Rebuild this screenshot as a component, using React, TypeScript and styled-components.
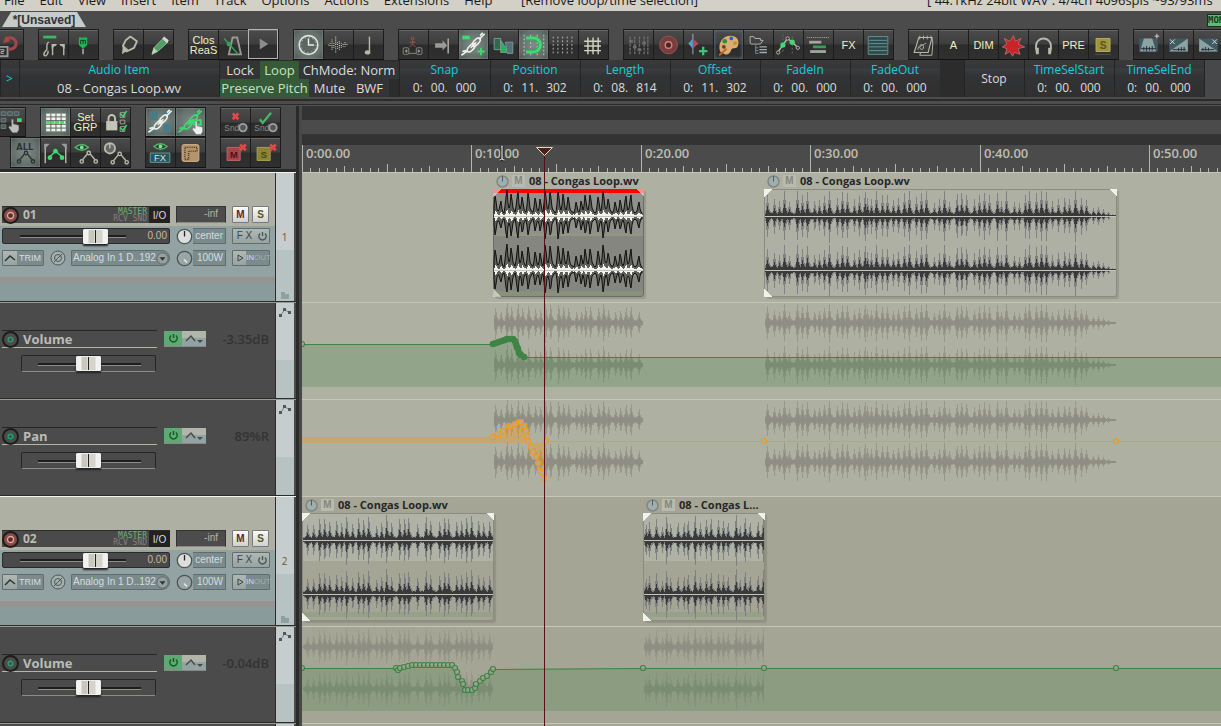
import React from 'react';
import styled, { createGlobalStyle, css } from 'styled-components';

const ui = '"Open Sans", "Noto Sans", sans-serif';
const arial = '"Liberation Sans", Arial, sans-serif';

const Global = createGlobalStyle`
  *, *::before, *::after { box-sizing: border-box; }
  body { margin: 0; background: #4b4b4b; font-family: ${ui}; }
  button, input, select { font: inherit; margin: 0; padding: 0; border: 0; }
  button { cursor: pointer; }
`;

/* ---------- page frame ---------- */

const Page = styled.div`
  height: 100vh;
  overflow: hidden;
  display: flex;
  flex-direction: column;
  background: #4b4b4b;
`;

const MenuBar = styled.nav`
  flex: none;
  height: 11px;
  overflow: hidden;
  display: flex;
  align-items: flex-end;
  justify-content: space-between;
  background: #d3d0c7;
  color: #1a1a1a;
  font-size: 13px;
  line-height: 22px;
  white-space: pre;
`;

const MenuGroup = styled.div`
  display: flex;
  gap: 15px;
  padding-left: 4px;
`;

const MenuItem = styled.button`
  background: none;
  color: inherit;
  white-space: pre;
`;

const AudioStatus = styled.span`
  flex: none;
  width: 294px;
`;

const TabRow = styled.div`
  flex: none;
  height: 18px;
  display: flex;
  align-items: flex-end;
  justify-content: space-between;
  padding: 0 0 2px 2px;
`;

const ProjectTab = styled.button`
  width: 84px;
  height: 15px;
  clip-path: polygon(9px 0, 75px 0, 100% 100%, 0 100%);
  background: #c6cccb;
  color: #333;
  font: bold 12px/14px ${arial};
`;

const MonitorBadge = styled.button`
  width: 26px;
  height: 13px;
  margin-right: -12px;
  border: 1px solid #16301c;
  background: #62b878;
  color: #10401c;
  font: bold 9px/11px "DejaVu Sans Mono", monospace;
  text-align: left;
`;

/* ---------- toolbars ---------- */

const Toolbar = styled.div<{ $indent?: number }>`
  flex: none;
  display: flex;
  gap: 14px;
  margin-left: ${p => p.$indent ?? 0}px;
`;

const ToolGroup = styled.div`
  flex: none;
  display: flex;
  border-bottom: 1px solid #121212;
  border-right: 1px solid #1c1c1c;
`;

const ToolButton = styled.button<{ $look?: 'on' | 'outline' | 'lit'; $h: number }>`
  flex: none;
  width: 30px;
  height: ${p => p.$h}px;
  display: grid;
  place-items: center;
  border-top: 1px solid #1a1a1a;
  border-left: 1px solid #1c1c1c;
  background: linear-gradient(#666 0 1px, #4a4a4a 1px, #3e3e3e 14px, #2c2c2c 15px, #303030);
  color: #eef0c4;
  font: 11px/10px ${arial};
  overflow: hidden;
  svg { display: block; }
  ${p => p.$look === 'on' && css`
    background: radial-gradient(#7f8c88, #616c69 70%, #48524f);
    box-shadow: inset 0 0 2px #a0aca8;
  `}
  ${p => p.$look === 'outline' && css`border: 1px solid #b4b4b4;`}
  ${p => p.$look === 'lit' && css`box-shadow: inset 0 0 3px 1px #536878;`}
`;

/* ---------- item info bar ---------- */

const InfoBar = styled.div`
  flex: none;
  height: 37px;
  display: flex;
  overflow: hidden;
  background: #2c2c2c;
  color: #dcdcdc;
  font-size: 12px;
  line-height: 18px;
`;

const InfoCell = styled.div<{ $w: number }>`
  flex: none;
  width: ${p => p.$w}px;
  display: flex;
  flex-direction: column;
  align-items: center;
  justify-content: center;
  padding: 1px 1px 0 0;
  border-left: 1px solid #242424;
  background: linear-gradient(#3a3a3a, #343639 8px, #3a3d42 9px, #323335 16px, #303030);
`;

const InfoTitle = styled.span`
  color: #14cfd4;
`;

const InfoValue = styled.span`
  display: flex;
  gap: 8px;
`;

const ItemName = styled.span`
  font-size: 13px;
`;

const InfoGap = styled.div`
  flex: none;
  width: 24px;
`;

const InfoTail = styled.div`
  flex: 1;
  border-left: 1px solid #242424;
  background: #46484a;
`;

const FlagCell = styled.div`
  flex: none;
  width: 180px;
  padding-top: 1px;
  border-left: 1px solid #242424;
`;

const FlagRow = styled.div`
  display: flex;
  font-size: 13px;
`;

const Flag = styled.button<{ $on?: boolean; $w: number }>`
  flex: none;
  width: ${p => p.$w}px;
  height: 18px;
  background: ${p => (p.$on ? '#345a38' : '#333436')};
  white-space: nowrap;
  color: ${p => (p.$on ? '#c4e4c0' : '#dcdcdc')};
`;

const Rail = styled.div`
  flex: none;
  height: 9px;
  background: linear-gradient(#4b4b4b 2px, #2b2b2b 2px 4px, #4d4d4d 4px 7px, #2b2b2b 7px 8px, #505050 8px);
`;

/* ---------- main split ---------- */

const Main = styled.main`
  flex: 1;
  min-height: 0;
  display: flex;
`;

const Panel = styled.aside`
  flex: none;
  width: 302px;
  display: flex;
  flex-direction: column;
  border-right: 3px solid #484848;
`;

const PanelInner = styled.div`
  flex: 1;
  min-height: 0;
  display: flex;
  flex-direction: column;
  border-right: 3px solid #2a2a2a;
`;

const PanelTools = styled.div`
  flex: none;
  height: 66px;
  padding-top: 1px;
  overflow: hidden;
  border-bottom: 3px solid #2a2a2a;
`;

const TrackRow = styled.section<{ $h: number; $env?: boolean }>`
  flex: none;
  height: ${p => p.$h}px;
  display: flex;
  padding-right: 2px;
  border-top: 1px solid ${p => (p.$env ? '#9a9c94' : '#f4f4ea')};
  border-bottom: 1px solid #2c2c2c;
`;

const TrackBody = styled.div`
  flex: 1;
  border-right: 1px solid #2c2c2c;
  padding: 33px 5px 0 2px;
  display: grid;
  grid-template-columns: 168px 50px 38px;
  grid-auto-rows: 16px;
  gap: 6px;
  background: linear-gradient(#aeb0a3 53px, #93a3a3 53px 104px, #949490 104px 110px, #8a9b9b 110px);
`;

const Strip = styled.div`
  flex: none;
  width: 18px;
  display: flex;
  flex-direction: column;
  align-items: center;
  justify-content: space-between;
  padding-right: 1px;
  background: linear-gradient(#c5cdce 60%, #b6c3c2 60%);
  color: #6e5a34;
  font-size: 10px;
  line-height: 16px;
`;

const StripNumber = styled.span`
  padding-top: 56px;
`;

const NameBox = styled.div`
  display: flex;
  align-items: center;
  height: 17px;
  background: #4a4a4a;
  border-top: 1px solid #2c2c2c;
`;

const RoundButton = styled.button<{ $rec?: boolean }>`
  flex: none;
  width: 17px;
  height: 17px;
  border: 2px solid #1d1d1d;
  border-radius: 50%;
  display: grid;
  place-items: center;
  background: ${p => (p.$rec ? '#8c4a46' : '#4c4c4c')};
`;

const TrackName = styled.span<{ $size?: number }>`
  flex: 1;
  padding-left: 4px;
  color: #bcbcb4;
  font-weight: bold;
  font-size: ${p => p.$size ?? 12}px;
  line-height: 16px;
`;

const Routing = styled.span`
  flex: none;
  display: flex;
  flex-direction: column;
  padding-right: 2px;
  color: #82827e;
  font: 8px/7px "DejaVu Sans Mono", monospace;
  text-align: right;
  b { font-weight: normal; color: #6fb07a; }
`;

const IoButton = styled.button`
  flex: none;
  width: 21px;
  height: 16px;
  background: #222;
  color: #ddd;
  font: 10px/15px ${arial};
`;

const Meter = styled.output`
  height: 17px;
  padding-right: 7px;
  border: 1px solid #333;
  border-bottom-color: #888;
  background: #4c4c4c;
  color: #b4b4ac;
  font: 10px/14px ${arial};
  text-align: right;
`;

const MuteSolo = styled.div`
  display: flex;
  gap: 3px;
`;

const LetterButton = styled.button<{ $c: string }>`
  width: 17px;
  height: 17px;
  border: 1px solid #7a7a7a;
  border-radius: 1px;
  background: linear-gradient(#fafafa, #cfd2d0);
  color: ${p => p.$c};
  font: bold 10px/14px ${arial};
`;

const FaderBox = styled.div`
  display: flex;
  align-items: center;
  justify-content: space-between;
  padding: 0 2px 0 17px;
  border: 1px solid #2a2a2a;
  border-radius: 2px;
  background: #4a4a4a;
  color: #c4b8a4;
  font: 10px/14px ${arial};
`;

const Fader = styled.input<{ $w: number }>`
  appearance: none;
  width: ${p => p.$w}px;
  height: 20px;
  background: linear-gradient(transparent 9px, #1e1e1e 9px 11px, #8e8e88 11px 12px, transparent 12px);
  &::-webkit-slider-thumb {
    appearance: none;
    width: 25px;
    height: 15px;
    border: 1px solid #eee;
    border-radius: 1px;
    background: linear-gradient(90deg, #f2f2f0 4px, #c8c8bc 5px 10px, #f0f0f0 11px, #222 11px 12px, #d4d4cc 12px 18px, #f2f2f0 19px);
    box-shadow: 0 2px 2px #222;
  }
`;

const Knobbed = styled.div`
  display: flex;
  align-items: center;
  svg { flex: none; }
`;

const KnobValue = styled.output`
  flex: 1;
  height: 16px;
  padding-right: 2px;
  border: 1px solid #5f6d6d;
  border-left: 0;
  background: #7b8b8b;
  color: #d6dce0;
  font: 10px/14px ${arial};
  text-align: right;
`;

const SmallPair = styled.div`
  display: flex;
  height: 16px;
  border: 1px solid #5f6d6d;
  border-radius: 1px;
  background: #7b8b8b;
`;

const SmallButton = styled.button<{ $w: number; $light?: boolean; $size?: number }>`
  width: ${p => p.$w}px;
  display: grid;
  place-items: center;
  background: ${p => (p.$light ? 'linear-gradient(#b0b8b4, #98a4a2)' : 'transparent')};
  color: ${p => (p.$light ? '#3c4444' : '#d6dce0')};
  font: ${p => p.$size ?? 9}px/12px ${arial};
  white-space: pre;
  i { font-style: normal; color: #a3adad; }
`;

const InputRow = styled.div`
  display: flex;
  align-items: center;
  justify-content: space-between;
`;

const InputPicker = styled.label`
  display: flex;
  align-items: center;
  width: 99px;
  height: 16px;
  border: 1px solid #5f6d6d;
  border-radius: 1px 8px 8px 1px;
  background: #7b8b8b;
  svg { flex: none; }
`;

const InputSelect = styled.select`
  appearance: none;
  flex: none;
  width: 84px;
  padding-left: 1px;
  background: transparent;
  color: #d6dce0;
  font: 10px/14px ${arial};
`;

const EnvBody = styled.div`
  flex: 1;
  border-right: 1px solid #2c2c2c;
  padding: 27px 6px 0 2px;
  background: #4b4b4b;
`;

const EnvTop = styled.div`
  display: flex;
  align-items: center;
  height: 18px;
`;

const EnvName = styled.div`
  width: 155px;
  height: 18px;
  display: flex;
  align-items: center;
  border-top: 1px solid #262626;
  border-bottom: 1px solid #b4b4a8;
`;

const EnvButtons = styled.div`
  display: flex;
  margin-left: 7px;
  height: 16px;
  border-bottom: 1px solid #888;
`;

const EnvButton = styled.button<{ $w: number; $on?: boolean }>`
  width: ${p => p.$w}px;
  height: 15px;
  display: grid;
  place-items: center;
  background: ${p => (p.$on ? '#62a874' : 'linear-gradient(#b2b6aa 7px, #93a3a3 7px)')};
`;

const EnvValue = styled.output`
  flex: 1;
  color: #333;
  font-weight: 600;
  font-size: 13px;
  line-height: 18px;
  text-align: right;
`;

const EnvSlider = styled.div`
  width: 135px;
  height: 17px;
  margin: 7px 0 0 19px;
  display: flex;
  align-items: center;
  padding-left: 16px;
  border: 1px solid #262626;
  border-bottom-color: #8c8c88;
  border-radius: 2px;
`;

/* ---------- arrange view ---------- */

const Arrange = styled.div`
  flex: 1;
  min-width: 0;
  position: relative;
  display: flex;
  flex-direction: column;
  overflow: hidden;
`;

const Regions = styled.div`
  flex: none;
  height: 39px;
  background: linear-gradient(#333 14px, #4b4b4b 14px 28px, #333 28px);
`;

const Ruler = styled.div`
  flex: none;
  height: 27px;
  position: relative;
  background: #4b4b4b;
  svg { display: block; }
`;

const RulerLabel = styled.span`
  position: absolute;
  top: 0;
  color: #bebeb2;
  font-size: 13px;
  line-height: 16px;
  font-weight: 600;
`;

const Lane = styled.div<{ $h: number; $bg: string }>`
  flex: none;
  height: ${p => p.$h}px;
  position: relative;
  background: ${p => p.$bg};
  border-top: 1px solid #c4c6ba;
`;

const LaneDrawing = styled.svg`
  display: block;
  width: 100%;
  height: 100%;
`;

const Item = styled.article<{ $w: number }>`
  position: absolute;
  top: 0;
  width: ${p => p.$w}px;
`;

const ItemHeader = styled.header`
  height: 16px;
  display: flex;
  align-items: center;
  gap: 3px;
  padding-left: 3px;
  white-space: nowrap;
`;

const ItemMute = styled.button`
  width: 13px;
  height: 12px;
  background: #b9bbb0;
  color: #85877c;
  font: bold 10px/12px ${arial};
`;

const ItemTitle = styled.span`
  flex: 1;
  min-width: 0;
  margin-left: 1px;
  overflow: hidden;
  text-overflow: ellipsis;
  color: #262626;
  font-size: 11px;
  line-height: 16px;
  font-weight: bold;
`;

const ItemClip = styled.div<{ $bg: string; $edge: string }>`
  height: 108px;
  border: 1px solid ${p => p.$edge};
  border-radius: 0 0 3px 3px;
  background: ${p => p.$bg};
  box-shadow: 2px 2px 1px rgba(90, 90, 70, 0.25);
  svg { display: block; margin: -1px; }
`;

const Playhead = styled.svg`
  position: absolute;
  top: 40px;
  left: 0;
  width: 100%;
  height: 100%;
  pointer-events: none;
`;

/* ---------- icons ---------- */

const G = '#b8b8aa';
const GR = '#3ddc70';
const S = { fill: 'none', stroke: G, strokeWidth: 1.5 } as const;

const Snd = () => (
  <g>
    <text x="3" y="25" fill="#8a8a8a" fontSize="9" fontFamily="Liberation Sans">Snd</text>
    <circle cx="23" cy="21" r="4" fill="#555" stroke="#98a0a4" strokeWidth="2" />
  </g>
);
const Nodes = ({ c = G, y = 0, x = 0 }: { c?: string; y?: number; x?: number }) => (
  <g transform={`translate(${x} ${y})`} fill="none" stroke={c} strokeWidth="1.5">
    <path d="M9 22l5-6M17 16l5 6" />
    <circle cx="8" cy="24" r="1.800" />
    <circle cx="15.500" cy="15" r="1.800" />
    <circle cx="23" cy="24" r="1.800" />
  </g>
);
const Chain = ({ c = '#f0f2ea' }: { c?: string }) => (
  <g fill="none" stroke={c} strokeWidth="1.7">
    <ellipse cx="12.500" cy="18" rx="5.500" ry="2.600" transform="rotate(-48 12.500 18)" />
    <ellipse cx="18" cy="12" rx="5.500" ry="2.600" transform="rotate(-48 18 12)" />
    <path d="M2 26l7-5M3 22l4-1M21 9l6-6M22 5l3-3M12 18l6-6" />
  </g>
);
const Eye = ({ x, y }: { x: number; y: number }) => (
  <g transform={`translate(${x} ${y})`}>
    <path d="M-7 0Q0-6 7 0Q0 6-7 0Z" fill="#1e4428" stroke="#58b070" strokeWidth="1.500" />
    <circle r="2" fill="#7ee090" />
  </g>
);
const Cross = ({ x, y, c = '#e04848' }: { x: number; y: number; c?: string }) => (
  <path d={`M${x - 3} ${y - 3}l6 6m0-6l-6 6`} stroke={c} strokeWidth="3" />
);
const Hand = ({ x, y }: { x: number; y: number }) => (
  <path transform={`translate(${x} ${y})`} d="M3 0h2v5l6 1.500v5l-2 3H4L0 9l1-2 2 1z" fill="#eee" stroke="#666" strokeWidth=".5" />
);

const icons: Record<string, React.ReactNode> = {
  revert: <g><path d="M2 17h12v10H2z" fill="none" stroke="#999" strokeWidth="2" /><path d="M6 20h4v2H7v2h3" stroke="#bbb" fill="none" /><path d="M13 9a6 6 0 1 1 2 10" fill="none" stroke="#a04848" strokeWidth="3.500" /><path d="M9 13l3-8 5 6z" fill="#a04848" /></g>,
  take: <g><path d="M4 5h14v3H4z" fill={GR} opacity=".75" /><path d="M10 12c-3 1-2 5-2 7s-5 5-3 7 5-2 4-5" {...S} /><path d="M14 26V15h4M26 26V15h-4" {...S} /><path d="M13 14h6l-6 5zM27 14h-6l6 5z" fill={G} /></g>,
  marker: <g><path d="M10 7h9v8l-4.500 4L10 15z" fill="#25b455" /><path d="M12 14v-4h5v4M14.500 10v4" stroke="#0d3a1c" fill="none" /><path d="M14.500 19v6" stroke={G} strokeWidth="1.500" /></g>,
  pen: <g><path d="M9 16l3-6 5-4 7 5-3 7-8 4z" fill="#3c3c3a" stroke={G} strokeWidth="2" strokeLinejoin="round" /><path d="M9 15l6 5-7 5z" fill={G} /></g>,
  pencil: <g><path d="M8 25l2-7L20 8l5 4-11 10z" fill="#4f9e66" stroke="#8fc49c" /><path d="M19 8l2-2 5 4-2 3z" fill="#d0d8cc" /><path d="M8 25l2-7 4 4z" fill="#c8ccb8" /></g>,
  metronome: <g><path d="M14 7h5l4 18H10z" fill="none" stroke="#9a9a94" strokeWidth="2" /><path d="M5 8l15 17" stroke="#2fa35a" strokeWidth="1.500" /><circle cx="10" cy="14" r="2.500" fill="#2fa35a" /></g>,
  play: <path d="M11 9l9 6-9 6z" fill="#8c8c8c" />,
  clock: <g><circle cx="15" cy="15" r="10" fill="#5c6764" stroke="#dfe3da" strokeWidth="1.700" /><path d="M15 8v7h6" stroke="#eef0e8" strokeWidth="1.500" fill="none" /><circle cx="15" cy="15" r="8" fill="none" stroke="#cfd4cc" strokeDasharray="1 3.200" /></g>,
  wave: <path d="M4 15h1M6 13v4M8 9v12M10 13v5M12 6v18M14 12v8M16 11v10M18 13v5M20 14v3M22 12v5M24 14v2" stroke="#c8c8bc" strokeDasharray="1 1" fill="none" strokeWidth="1.200" />,
  note: <g><path d="M16 6v17" stroke={G} strokeWidth="1.500" /><ellipse cx="14" cy="23" rx="3" ry="2.300" fill={G} /></g>,
  walk: <g fill="none" stroke="#8a8a84"><circle cx="14" cy="8" r="1.500" stroke="#a0584a" /><path d="M14 10v4l-3 3M14 14l3 3M11 12h6" stroke="#a0584a" /><rect x="4" y="18" width="6" height="7" rx="1" /><rect x="18" y="18" width="6" height="7" rx="1" /><path d="M8 20v3l-2-1.500zM20 20v3l2-1.500z" fill={G} /><path d="M10 24h8" /></g>,
  toEnd: <g><path d="M6 13h8v-3l5 5.500-5 5.500v-3H6z" fill="#9a9a94" /><path d="M20 8v16" stroke={G} strokeWidth="1.500" /></g>,
  chainPlus: <g><path d="M3 5h8v4H3z" fill={GR} /><Chain /><path d="M23 18v8M19 22h8" stroke={GR} strokeWidth="2" /></g>,
  crossfade: <g stroke="#7d9a9a"><path d="M5 8h7v12H5z" fill="#2f6b4b" /><path d="M12 10l9 13H12z" fill="#22b455" /><path d="M17 12h8v12h-6z" fill="#4f7478" /></g>,
  magnet: <g><path d="M5 4v22M12 4v22M19 4v22M26 4v22" stroke="#c4d0c4" strokeDasharray="2 2" /><path d="M7 8h8a7 7 0 0 1 0 14H7" fill="none" stroke={GR} strokeWidth="4" /><path d="M7 9.500h8a5 5 0 0 1 0 11H7" fill="none" stroke="#115544" opacity=".4" /></g>,
  dots: <path d="M4 6v20M9 6v20M14 6v20M19 6v20M24 6v20" stroke="#bcbcb4" strokeDasharray="2 2" />,
  grid: <path d="M9 7v18M14.500 7v18M20 7v18M5 11h18M5 16h18M5 21h18" stroke="#d4d4c4" strokeWidth="1.500" />,
  mixer: <g stroke="#6c6c6c" strokeWidth="1.500"><path d="M6 6v20M11 6v20M16 6v20M21 6v20M25 6v20" strokeDasharray="3 1" /><path d="M5 11h4M9 17h4M14 20h4M19 13h4" strokeWidth="3" /></g>,
  record: <g><circle cx="15" cy="15" r="9.500" fill="#7c3c3c" stroke="#8d5a5a" /><circle cx="15" cy="15" r="3.500" fill="#4c2222" stroke="#c48a80" strokeWidth="1.500" /></g>,
  split: <g><path d="M9 3v22" stroke="#a4b4bc" /><path d="M9 8v11l-5-5.500z" fill="#4aa4cc" /><path d="M9 8v11l6-5.500z" fill="#b84c44" /><path d="M20 17v9M15.500 21.500h9" stroke="#3cc868" strokeWidth="2.500" /></g>,
  palette: <g><path d="M6 22C3 13 9 5 17 5s10 6 8 11c-1 4-6 1-7 4s-3 6-7 5z" fill="#d8ae72" /><circle cx="11" cy="11" r="2.500" fill="#2f8a44" /><circle cx="18" cy="8" r="2" fill="#385cb4" /><circle cx="22" cy="13" r="2" fill="#c49028" /><circle cx="10" cy="17" r="2" fill="#5c4030" /><path d="M5 26l8-7" stroke="#c4662c" strokeWidth="2" /></g>,
  folder: <g><path d="M6 13V6h4l1 2h6v2h3l-3 4H7z" fill="none" stroke={G} /><path d="M12 15v9h3M12 18h3M12 21h3" stroke="#7c8c90" fill="none" /><path d="M16 17h8M16 20h8M16 23h8" stroke="#a4acb0" strokeWidth="1.500" /></g>,
  envelope: <g><path d="M9 4v20M19 6v20" stroke="#5a7a62" strokeDasharray="2 2" /><path d="M4 22l5-7 5-7 5 4 5 5" {...S} /><circle cx="4" cy="23" r="1.800" fill="#333" stroke={G} /><circle cx="14" cy="8" r="1.800" fill="#333" stroke={G} /><circle cx="25" cy="18" r="1.800" fill="#333" stroke={G} /><circle cx="9" cy="15" r="2.800" fill={GR} /><circle cx="19" cy="12" r="2.800" fill={GR} /></g>,
  bars: <g><path d="M3 7h24" stroke={G} strokeDasharray="1 1" /><path d="M5 12h13" stroke="#a4a4a0" strokeWidth="3" /><path d="M9 17h14" stroke="#3f9c58" strokeWidth="3" /><path d="M6 22h17" stroke="#a4a4a0" strokeWidth="3" /></g>,
  list: <g><path d="M4 6h21v19H4z" fill="#2a4a4c" stroke="#6c9494" /><path d="M5 10h19M5 13.500h19M5 17h19M5 21h19" stroke="#6f9494" /></g>,
  notes: <g><path d="M10 7h14l-4 16H5z" fill="#3a3a3a" stroke={G} strokeWidth="1.200" /><path d="M24 7l1 6-1 13H11l1-3" fill="none" stroke={G} /><path d="M11 5v4M15 5v4M19 5v4M23 5v3" stroke={G} /><path d="M9 20c1-6 6-7 6-3s-3 3-4 1 6-4 7-5" {...S} strokeWidth="1" /></g>,
  burst: <path d="M15 5l2 6 6-3-3 6 7 3-7 2 2 6-6-2-2 4-3-5-5 3 2-6-5-2 5-3-3-6 6 3z" fill="#c8242a" stroke="#b46a6a" />,
  phones: <g><path d="M7 19v-3a8 8 0 0 1 16 0v3" {...S} strokeWidth="2" /><path d="M6 18h4v7H7zM24 18h-4v7h3z" fill={G} /></g>,
  solo: <g><path d="M7 8h15v14H7z" fill="#a09440" stroke="#b8b068" /><path d="M6 25h17" stroke="#555" /><text x="11" y="19" fontSize="11" fontWeight="bold" fontFamily="Liberation Sans" fill="#5c5418">S</text></g>,
  fadeA: <g><path d="M5 8h20v14H5z" fill="#3f5a60" /><path d="M10 8h9l4 14H6z" fill="#8aa4a4" /><path d="M7 19h16M10 17v4M13 16v6M16 17v4M19 16v5" stroke="#222233" /><path d="M24 3v5M21.500 5.500h5" stroke="#ddd" /></g>,
  fadeB: <g><path d="M5 8h20v14H5z" fill="#3f5a60" /><path d="M25 8v14H5z" fill="#8aa4a4" /><path d="M9 20h14M15 18v3M18 17v4M21 17v4" stroke="#222233" /><path d="M6 9l5 5m0-5l-5 5" stroke="#ddd" /></g>,
  fadeC: <g><path d="M5 8h20v14H5z" fill="#3f5a60" /><path d="M5 8v14h20z" fill="#8aa4a4" /><path d="M7 20h14M9 18v3M12 17v4M15 18v3" stroke="#222233" /><path d="M19 9l5 5m0-5l-5 5" stroke="#ddd" /></g>,
  groupHand: <g><path d="M5 4h5v4H5zM12 4h5v4h-5zM19 4h5v4h-5zM5 11h5v4H5zM5 18h5v4H5z" fill="#4c5c5c" stroke="#708080" /><path d="M22 11h5v4h-5z" fill={GR} /><g opacity=".75"><Hand x={13} y={12} /></g></g>,
  matrix: <g><path d="M5 6h21v19H5z" fill="#f0f2ec" /><path d="M5 9.500h21M5 13.500h21M5 17.500h21M5 21.500h21M10 6v19M15.500 6v19M21 6v19" stroke="#55605c" /><path d="M5 15.500h21" stroke={GR} strokeWidth="3" strokeDasharray="4 1" /></g>,
  lock: <g><path d="M5 14h12v10H5z" fill="#c4c4b8" /><path d="M7.500 14v-3a3.500 3.500 0 0 1 7 0v3" stroke="#c4c4b8" strokeWidth="2" fill="none" /><path d="M20 5h5v5h-5zM20 13h5v4h-5zM20 20h5v5h-5z" fill="none" stroke="#a4a498" /><path d="M20 6l3 3 4-6M20 21l3 3 4-6" stroke={GR} strokeWidth="1.500" fill="none" /></g>,
  chainBlocks: <g><path d="M4 4h8v9H4zM18 17h8v9h-8zM18 4h7v4h-7zM4 21h7v5H4z" fill="#4a7c88" /><Chain /></g>,
  chainHand: <g><Chain c={GR} /><path d="M19 13h7v5h-7z" fill="none" stroke={GR} strokeWidth="2" /><Hand x={17} y={14} /></g>,
  sndOff: <g><Cross x={15} y={9} /><Snd /></g>,
  sndOn: <g><path d="M9 12l3 4 9-11" stroke="#48b468" strokeWidth="2.500" fill="none" /><Snd /></g>,
  envAll: <g><text x="5" y="12" fontSize="9" fontWeight="bold" fontFamily="DejaVu Sans" fill="#2e3432">ALL</text><Nodes c="#2e3432" /></g>,
  envBox: <g><path d="M4 26V6h3M26 26V6h-3" {...S} /><path d="M3 5h6l-6 6zM27 5h-6l6 6z" fill="#999" /><path d="M9 19l6-6 7 6" stroke={GR} strokeWidth="1.500" fill="none" /><circle cx="9" cy="20" r="2.500" fill={GR} /><circle cx="15" cy="13" r="2.500" fill={GR} /><circle cx="22" cy="20" r="2.500" fill={GR} /></g>,
  envEye: <g><Eye x={11} y={9} /><Nodes x={3} y={0} /></g>,
  envKnob: <g><circle cx="9" cy="10" r="5.500" fill="#666" stroke={G} strokeWidth="2" /><path d="M9 5v5" stroke="#eee" /><Nodes x={4} y={1} /></g>,
  fxEye: <g><Eye x={15} y={8} /><path d="M4 15h21v10H4z" fill="#24585e" stroke="#6c9ca0" /><text x="8" y="24" fontSize="10" fontFamily="Liberation Sans" fill="#d4e4e4">FX</text></g>,
  ruler: <g><rect x="6" y="6" width="18" height="18" rx="2" fill="#b4946c" stroke="#d4b48c" /><path d="M9 9h13v4H13v9H9z" fill="none" stroke="#443420" strokeDasharray="1 1" strokeWidth="1.500" /></g>,
  mOff: <g><path d="M6 9h14v14H6z" fill="#a84448" stroke="#b86a6a" /><text x="9" y="20" fontSize="10" fontWeight="bold" fontFamily="Liberation Sans" fill="#4c1416">M</text><Cross x={23} y={9} /></g>,
  sOff: <g><path d="M6 9h14v14H6z" fill="#8a8434" stroke="#a8a258" /><text x="10" y="20" fontSize="10" fontWeight="bold" fontFamily="Liberation Sans" fill="#4c4814">S</text><Cross x={23} y={9} /></g>,
};

type Tool = [string, ('on' | 'outline' | 'lit')?];
const words: Record<string, string> = { 'Close ReaScript': 'Clos ReaS', 'Set group': 'Set GRP', FX: 'FX', A: 'A', DIM: 'DIM', PRE: 'PRE' };

const mainTools: Tool[][] = [
  [['revert']],
  [['take'], ['marker']],
  [['pen'], ['pencil']],
  [['Close ReaScript'], ['metronome'], ['play', 'outline']],
  [['clock', 'on'], ['wave'], ['note']],
  [['walk'], ['toEnd'], ['chainPlus', 'on'], ['crossfade'], ['magnet', 'on'], ['dots'], ['grid']],
  [['mixer'], ['record'], ['split'], ['palette', 'lit'], ['folder'], ['envelope'], ['bars'], ['FX'], ['list']],
  [['notes'], ['A'], ['DIM'], ['burst'], ['phones'], ['PRE'], ['solo']],
  [['fadeA'], ['fadeB'], ['fadeC']],
];
const panelToolsTop: Tool[][] = [
  [['groupHand']],
  [['matrix', 'on'], ['Set group'], ['lock']],
  [['chainBlocks', 'on'], ['chainHand', 'on']],
  [['sndOff'], ['sndOn']],
];
const panelToolsBottom: Tool[][] = [
  [['envAll', 'on'], ['envBox'], ['envEye'], ['envKnob']],
  [['fxEye'], ['ruler']],
  [['mOff'], ['sOff']],
];

const Tools = ({ groups, indent, h = 29 }: { groups: Tool[][]; indent?: number; h?: number }) => (
  <Toolbar $indent={indent} role="toolbar">
    {groups.map((g, i) => (
      <ToolGroup key={i}>
        {g.map(([name, look]) => (
          <ToolButton key={name} $look={look} $h={h} aria-label={name}>
            {words[name] ?? <svg width="29" height="28" viewBox="0 0 30 30">{icons[name]}</svg>}
          </ToolButton>
        ))}
      </ToolGroup>
    ))}
  </Toolbar>
);

/* ---------- waveforms ---------- */

// Transients as [position, level], three steps to a pixel.
type Hits = [number, number][];

const loopA: Hits = [[5, 60], [21, 45], [39, 78], [53, 65], [72, 74], [86, 58], [104, 68], [125, 55], [140, 50], [155, 76], [170, 72], [194, 72], [209, 65], [224, 58], [248, 42], [263, 45], [275, 62], [290, 64], [314, 58], [329, 74], [344, 52], [365, 42], [380, 48], [396, 60], [411, 62], [435, 42]];
const loopB: Hits = [[7, 62], [28, 52], [43, 45], [58, 75], [73, 42], [97, 75], [112, 62], [127, 72], [149, 45], [163, 48], [178, 60], [193, 76], [217, 55], [232, 72], [247, 68], [268, 50], [283, 60], [300, 72], [307, 55], [319, 50], [334, 76], [352, 62], [367, 62], [385, 48], [400, 55], [418, 68], [433, 76], [454, 58], [469, 70], [484, 76], [508, 40], [523, 50], [538, 76], [553, 42], [576, 65], [590, 68], [605, 64], [628, 50], [643, 62], [658, 70], [673, 62], [697, 70], [709, 45], [724, 74], [748, 42], [763, 40], [781, 62], [793, 74], [814, 68], [829, 76], [844, 72], [862, 44], [880, 52], [899, 54], [913, 52], [931, 76], [949, 55], [964, 48], [985, 25], [1000, 28], [1015, 20], [1030, 12]];
const loopC: Hits = [[14, 45], [32, 45], [50, 62], [65, 64], [80, 55], [101, 58], [116, 50], [131, 70], [149, 48], [167, 66], [182, 60], [197, 70], [221, 42], [236, 50], [251, 74], [266, 50], [290, 64], [305, 62], [317, 66], [344, 48], [369, 68], [383, 58], [410, 55], [425, 66], [437, 64], [461, 55], [476, 58], [491, 66], [506, 72], [527, 58], [542, 52], [560, 55]];
const loopD: Hits = [[6, 45], [16, 55], [37, 62], [55, 40], [68, 68], [80, 48], [102, 50], [120, 50], [132, 58], [153, 72], [169, 52], [187, 60], [201, 64], [223, 60], [238, 58], [252, 52], [276, 74], [288, 42], [303, 66], [318, 52], [342, 55], [358, 72]];

function columns(hits: Hits, width: number) {
  const end = hits[hits.length - 1][1] < 20 ? width * 3 : Infinity;
  return Array.from({ length: width }, (_, x) => {
    const t = x * 3 + 1;
    let peak = 0;
    let body = 0;
    for (const [p, a] of hits) {
      const d = t - p;
      if (d < -9 || d > 30) continue;
      const near = Math.abs(d) < 2 ? 1 : Math.max(0, 1 - Math.abs(d) / 8);
      const tail = d >= 0 ? Math.exp(-d / 9) : Math.max(0, 1 + d / 8);
      peak = Math.max(peak, a * near, a * 0.65 * tail);
      body = Math.max(body, a * 0.48 * near, a * 0.36 * tail);
    }
    const floor = end === Infinity ? 8 : Math.min(8, (end - t) / 20);
    peak = Math.max(peak, floor + ((x * 7) % 5));
    body = Math.max(body, floor - 2 + ((x * 5) % 4));
    const skew = 0.9 + ((x * 13) % 7) / 40;
    return { x, up: peak / 3, down: (peak * skew) / 3, bu: body / 3, bd: (body * skew) / 3 };
  });
}

const bars = (cols: ReturnType<typeof columns>, mid: number, scale: number, body: boolean) =>
  cols
    .map(c => {
      const u = Math.max(body ? 1 : 0, Math.round((body ? c.bu : c.up) * scale));
      const d = Math.max(1, Math.round((body ? c.bd : c.down) * scale));
      return `M${c.x} ${mid - u}h1v${u + d}h-1z`;
    })
    .join('');

const outline = (cols: ReturnType<typeof columns>, mid: number) =>
  'M' + cols.map(c => `${c.x} ${Math.round(mid - c.up)}`).join('L') + 'L' +
  [...cols].reverse().map(c => `${c.x} ${Math.round(mid + c.down * 0.9)}`).join('L') + 'Z';

const PX_PER_SECOND = 16.94;
const at = (seconds: number) => Math.round(seconds * PX_PER_SECOND);

interface MediaItem { start: number; width: number; hits: Hits; selected?: boolean; tinted?: boolean; title: string }

const itemsOne: MediaItem[] = [
  { start: 11.302, width: 151, hits: loopA, selected: true, title: '08 - Congas Loop.wv' },
  { start: 27.3, width: 353, hits: loopB, title: '08 - Congas Loop.wv' },
];
const itemsTwo: MediaItem[] = [
  { start: 0, width: 192, hits: loopC, tinted: true, title: '08 - Congas Loop.wv' },
  { start: 20.13, width: 122, hits: loopD, tinted: true, title: '08 - Congas Loop.wv' },
];

function Clip({ item }: { item: MediaItem }) {
  const cols = columns(item.hits, item.width - 2);
  const w = item.width;
  const bg = item.selected
    ? 'linear-gradient(#90918a 44px, #8c9a80 44px 46px, #868680 46px 101px, #87917b 101px)'
    : item.tinted
      ? 'linear-gradient(#b0b2a5 47px, #a4a595 47px 98px, #96a288 98px 103px, #a4a595 103px)'
      : '#aeb0a3';
  return (
    <Item $w={w} style={{ left: at(item.start) }}>
      <ItemHeader>
        <svg width="13" height="13" viewBox="0 0 13 13">
          <circle cx="6.500" cy="6.500" r="5.500" fill="#a0aeb0" stroke="#7f8780" strokeWidth="1.500" />
          <path d="M6.500 1v5.500" stroke="#4a5c64" />
        </svg>
        <ItemMute aria-label="Mute item">M</ItemMute>
        <ItemTitle>{item.title}</ItemTitle>
      </ItemHeader>
      <ItemClip $bg={bg} $edge={item.selected ? '#6c6c68' : '#8a8c80'}>
        <svg width={w} height="108" shapeRendering="crispEdges">
          {item.selected && <path d={`M0 0h${w}v4H0z`} fill="#f00" />}
          <g transform="translate(1 0)">
            {[27, 81].map(mid =>
              item.selected ? (
                <g key={mid}>
                  <path d={outline(cols, mid)} fill="#5e5e5a" stroke="#101010" shapeRendering="auto" />
                  <path d={bars(cols, mid, 0.5, true)} fill="#f2f2f0" />
                </g>
              ) : (
                <g key={mid}>
                  <path d={bars(cols, mid, 1, false)} fill="#7a7c80" fillOpacity=".9" />
                  <path d={bars(cols, mid, 1, true)} fill="#3a3a3a" />
                </g>
              ),
            )}
            <path d={`M0 27h${w - 2}v1H0zM0 81h${w - 2}v1H0z`} fill="#c4c6b8" />
          </g>
          <g fill="#f0f2ec">
            <path d={`M0 0h8l-8 8zM0 108v-8l8 8z`} fillOpacity={item.selected ? 0.6 : 1} />
            <path d={`M${w} 0h-8l8 8z`} fillOpacity={item.selected ? 0.6 : 1} />
          </g>
        </svg>
      </ItemClip>
    </Item>
  );
}

const Ghosts = ({ items }: { items: MediaItem[] }) => (
  <g shapeRendering="crispEdges">
    {items.map(it => {
      const cols = columns(it.hits, it.width - 2);
      return (
        <g key={it.start} transform={`translate(${at(it.start) + 1} 0)`}>
          {[20, 62].map(mid => (
            <g key={mid}>
              <path d={bars(cols, mid, 0.76, false)} fill="#97988a" />
              <path d={bars(cols, mid, 0.76, true)} fill="#8e8f82" />
            </g>
          ))}
        </g>
      );
    })}
  </g>
);

const FAR = 6000;
type Pt = [number, number];
const line = (pts: Pt[]) => 'M' + pts.map(p => p.join(' ')).join('L');

interface Curve { pts: Pt[]; dots: Pt[]; color: string; base: number; fillTo: number }

const volumeOne: Curve = {
  color: '#3f8444', base: 84, fillTo: FAR,
  pts: [[0, 41], [191, 41], [197, 40], [203, 37], [211, 36], [215, 42], [217, 50], [222, 54], [FAR, 54]],
  dots: [[0, 41]],
};
const volumeOneDots: Pt[] = [[191, 41], [194, 40], [197, 39], [200, 38], [203, 37], [205, 36], [208, 36], [211, 36], [213, 38], [214, 41], [215, 44], [216, 46], [217, 50], [219, 52], [222, 54]];
const panDots: Pt[] = [[191, 37], [196, 34], [201, 31], [206, 26], [209, 26], [213, 24], [217, 22], [219, 22], [222, 26], [224, 31], [225, 36], [226, 41], [229, 47], [231, 52], [234, 57], [236, 63], [238, 71], [240, 73], [242, 78], [244, 41]];
const panOne: Curve = {
  color: '#f39a1c', base: 43, fillTo: 244,
  pts: [[0, 37], ...panDots, [FAR, 41]],
  dots: [...panDots, [462, 41], [814, 41]],
};
const volTwoDots: Pt[] = [[94, 41], [96, 43], [98, 41], [102, 40], [106, 39], [110, 38], [114, 38], [118, 38], [122, 38], [126, 38], [130, 38], [134, 38], [138, 38], [142, 38], [146, 38], [150, 38], [153, 41], [155, 45], [156, 50], [160, 54], [161, 57], [163, 63], [166, 63], [170, 63], [173, 61], [174, 57], [178, 54], [181, 51], [185, 49], [189, 45], [191, 42]];
const volumeTwo: Curve = {
  color: '#3f8444', base: 84, fillTo: FAR,
  pts: [[0, 41], ...volTwoDots, [341, 41], [FAR, 41]],
  dots: [[0, 41], ...volTwoDots, [341, 41], [462, 41], [814, 41]],
};

const EnvelopeLane = ({ items, curve, solid, bg }: { items: MediaItem[]; curve: Curve; solid?: Pt[]; bg: string }) => (
  <Lane $h={97} $bg={bg}>
    <LaneDrawing>
      <Ghosts items={items} />
      <path
        d={line(curve.pts.filter(p => p[0] <= curve.fillTo)) + `L${curve.fillTo} ${curve.base}L0 ${curve.base}Z`}
        fill={curve.color}
        fillOpacity={curve.color === '#3f8444' ? 0.25 : 0.4}
      />
      <path d={line(curve.pts)} fill="none" stroke={curve.color} transform="translate(0 .5)" />
      {curve.dots.map(([x, y], i) => (
        <circle key={i} cx={x} cy={y} r="2.500" fill={bg} fillOpacity=".8" stroke={curve.color} strokeWidth="1.200" />
      ))}
      {solid?.map(([x, y], i) => <circle key={i} cx={x} cy={y} r="3.300" fill={curve.color} />)}
    </LaneDrawing>
  </Lane>
);

const majors = [0, 10, 20, 30, 40, 50, 60, 70, 80, 90, 100, 110];
const tickPath = Array.from({ length: 240 }, (_, i) => {
  const h = i % 20 === 0 ? 27 : i % 10 === 0 ? 8 : i % 5 === 0 ? 6 : 4;
  return `M${at(i / 2)} ${27 - h}h1v${h}h-1z`;
}).join('');

/* ---------- track panel parts ---------- */

const Knob = ({ low }: { low?: boolean }) => (
  <svg width="17" height="17" viewBox="0 0 17 17">
    <circle cx="8.500" cy="8.500" r="7.200" fill={low ? '#9aa6a6' : '#dcdedc'} stroke="#4c5454" strokeWidth="1.300" />
    <path d={low ? 'M8 9.500l3 3' : 'M8.500 3v5.500'} stroke={low ? '#eee' : '#222'} strokeWidth="1.300" />
  </svg>
);

const PowerIcon = ({ c }: { c: string }) => (
  <svg width="11" height="11" viewBox="0 0 11 11" fill="none" stroke={c} strokeWidth="1.400">
    <path d="M3 2.500a3.700 3.700 0 1 0 5 0M5.500 1v4" />
  </svg>
);

const EnvShape = () => (
  <svg width="14" height="12" viewBox="0 0 14 12" fill="#50585a">
    <path d="M3 8l3.500-5L11 5" fill="none" stroke="#7a8282" />
    <path d="M1 7h3v3H1zM5 1h3v3H5zM10 4h3v3h-3z" />
  </svg>
);

const TrackPanel = ({ n }: { n: number }) => (
  <TrackRow $h={130}>
    <TrackBody>
      <NameBox>
        <RoundButton $rec aria-label={`Record arm track ${n}`}>
          <svg width="9" height="9"><circle cx="4.500" cy="4.500" r="3" fill="#5c2c2a" stroke="#dcaaa0" strokeWidth="1.300" /></svg>
        </RoundButton>
        <TrackName>{`0${n}`}</TrackName>
        <Routing><b>MASTER</b>RCV SND</Routing>
        <IoButton>I/O</IoButton>
      </NameBox>
      <Meter>-inf</Meter>
      <MuteSolo>
        <LetterButton $c="#6a1c1c">M</LetterButton>
        <LetterButton $c="#5c5418">S</LetterButton>
      </MuteSolo>

      <FaderBox>
        <Fader $w={106} type="range" min="0" max="100" defaultValue="78" aria-label={`Track ${n} volume`} />
        <output>0.00</output>
      </FaderBox>
      <Knobbed><Knob /><KnobValue>center</KnobValue></Knobbed>
      <SmallPair>
        <SmallButton $w={23} $light $size={10}>F X</SmallButton>
        <SmallButton $w={13} $light aria-label="Bypass effects"><PowerIcon c="#4c5656" /></SmallButton>
      </SmallPair>

      <InputRow>
        <SmallPair>
          <SmallButton $w={14} $light aria-label="Envelopes">
            <svg width="12" height="12"><path d="M1 9l5-5 5 4" fill="none" stroke="#2c3434" strokeWidth="1.500" /></svg>
          </SmallButton>
          <SmallButton $w={26}>TRIM</SmallButton>
        </SmallPair>
        <svg width="16" height="16" viewBox="0 0 16 16" fill="none" stroke="#4c5656">
          <circle cx="8" cy="8" r="7" fill="#a4b0ae" /><circle cx="8" cy="8" r="3.500" /><path d="M4 12l8-8" />
        </svg>
        <InputPicker>
          <InputSelect aria-label={`Track ${n} input`}><option>Analog In 1 D..192</option></InputSelect>
          <svg width="13" height="13" viewBox="0 0 15 15"><circle cx="7.500" cy="7.500" r="6.500" fill="#96a09e" stroke="#566262" /><path d="M4 6h7l-3.500 4z" fill="#2c3434" /></svg>
        </InputPicker>
      </InputRow>
      <Knobbed><Knob low /><KnobValue>100W</KnobValue></Knobbed>
      <SmallPair>
        <SmallButton $w={13} $light aria-label="Monitor">
          <svg width="10" height="10"><path d="M3 2l5 3-5 3z" fill="none" stroke="#3c4646" /></svg>
        </SmallButton>
        <SmallButton $w={23} $size={8}><span>IN<i>OUT</i></span></SmallButton>
      </SmallPair>
    </TrackBody>
    <Strip>
      <StripNumber>{n}</StripNumber>
      <svg width="10" height="12"><path d="M1 3h4v2h4v5H1z" fill="#8fa0a0" /></svg>
    </Strip>
  </TrackRow>
);

const EnvPanel = ({ name, value }: { name: string; value: string }) => (
  <TrackRow $h={97} $env>
    <EnvBody>
      <EnvTop>
        <EnvName>
          <RoundButton aria-label={`Arm ${name}`}>
            <svg width="9" height="9"><circle cx="4.500" cy="4.500" r="2.300" fill="none" stroke="#20a068" strokeWidth="1.500" /></svg>
          </RoundButton>
          <TrackName $size={13}>{name}</TrackName>
        </EnvName>
        <EnvButtons>
          <EnvButton $w={18} $on aria-label={`Bypass ${name}`}><PowerIcon c="#0d5c24" /></EnvButton>
          <EnvButton $w={24} aria-label={`${name} mode`}>
            <svg width="20" height="11"><path d="M2 8l5-5 4 5" fill="none" stroke="#444c4c" strokeWidth="1.500" /><path d="M13 7h6l-3 3z" fill="#444c4c" /></svg>
          </EnvButton>
        </EnvButtons>
        <EnvValue>{value}</EnvValue>
      </EnvTop>
      <EnvSlider>
        <Fader $w={103} type="range" min="0" max="100" defaultValue="49" aria-label={name} />
      </EnvSlider>
    </EnvBody>
    <Strip><svg width="14" height="18" viewBox="0 -4 14 18"><EnvShape /></svg></Strip>
  </TrackRow>
);

const Info = ({ title, value, w }: { title: string; value: string; w: number }) => (
  <InfoCell $w={w}>
    <InfoTitle>{title}</InfoTitle>
    <InfoValue>{value.split(' ').map((v, i) => <span key={i}>{v}</span>)}</InfoValue>
  </InfoCell>
);

const ONE = '#aeb0a2';
const TWO = '#a4a595';

export default function App() {
  return (
    <Page>
      <Global />
      <MenuBar>
        <MenuGroup>
          {['File', 'Edit', 'View', 'Insert', 'Item', 'Track', 'Options', 'Actions', 'Extensions', 'Help'].map(m => <MenuItem key={m}>{m}</MenuItem>)}
          <MenuItem>{'    [Remove loop/time selection]'}</MenuItem>
        </MenuGroup>
        <AudioStatus>[ 44.1kHz 24bit WAV : 4/4ch 4096spls ~93/93ms</AudioStatus>
      </MenuBar>
      <TabRow>
        <ProjectTab>*[Unsaved]</ProjectTab>
        <MonitorBadge>MON</MonitorBadge>
      </TabRow>
      <Tools groups={mainTools} indent={-7} h={30} />

      <InfoBar>
        <InfoCell $w={19}><InfoTitle>&gt;</InfoTitle></InfoCell>
        <InfoCell $w={200}>
          <InfoTitle>Audio Item</InfoTitle>
          <ItemName>08 - Congas Loop.wv</ItemName>
        </InfoCell>
        <FlagCell>
          <FlagRow>
            <Flag $w={40}>Lock</Flag>
            <Flag $w={39} $on>Loop</Flag>
            <Flag $w={100}>ChMode: Norm</Flag>
          </FlagRow>
          <FlagRow>
            <Flag $w={89} $on>Preserve Pitch</Flag>
            <Flag $w={41}>Mute</Flag>
            <Flag $w={39}>BWF</Flag>
          </FlagRow>
        </FlagCell>
        <Info w={91} title="Snap" value="0: 00. 000" />
        <Info w={90} title="Position" value="0: 11. 302" />
        <Info w={90} title="Length" value="0: 08. 814" />
        <Info w={90} title="Offset" value="0: 11. 302" />
        <Info w={90} title="FadeIn" value="0: 00. 000" />
        <Info w={90} title="FadeOut" value="0: 00. 000" />
        <InfoGap />
        <InfoCell $w={60}><span>Stop</span></InfoCell>
        <Info w={90} title="TimeSelStart" value="0: 00. 000" />
        <Info w={90} title="TimeSelEnd" value="0: 00. 000" />
        <InfoTail />
      </InfoBar>
      <Rail />

      <Main>
        <Panel>
          <PanelInner>
            <PanelTools>
              <Tools groups={panelToolsTop} indent={-5} />
              <Tools groups={panelToolsBottom} indent={10} h={30} />
            </PanelTools>
            <TrackPanel n={1} />
            <EnvPanel name="Volume" value="-3.35dB" />
            <EnvPanel name="Pan" value="89%R" />
            <TrackPanel n={2} />
            <EnvPanel name="Volume" value="-0.04dB" />
            <EnvPanel name="Pan" value="center" />
          </PanelInner>
        </Panel>

        <Arrange>
          <Regions />
          <Ruler>
            <svg width="100%" height="27" shapeRendering="crispEdges"><path d={tickPath} fill="#b6b6aa" /></svg>
            {majors.map(s => (
              <RulerLabel key={s} style={{ left: at(s) + 4 }}>{`${Math.floor(s / 60)}:${String(s % 60).padStart(2, '0')}.00`}</RulerLabel>
            ))}
          </Ruler>
          <Lane $h={130} $bg={ONE}>{itemsOne.map(it => <Clip key={it.start} item={it} />)}</Lane>
          <EnvelopeLane items={itemsOne} curve={volumeOne} solid={volumeOneDots} bg={ONE} />
          <EnvelopeLane items={itemsOne} curve={panOne} bg={ONE} />
          <Lane $h={130} $bg={TWO}>{itemsTwo.map(it => <Clip key={it.start} item={it} />)}</Lane>
          <EnvelopeLane items={itemsTwo} curve={volumeTwo} bg={TWO} />
          <Lane $h={97} $bg={TWO} />
          <Playhead>
            <path d="M242 8h1v2000h-1z" fill="#5a1014" />
            <path d="M234.500 1.500h16l-8 8z" fill="#4c2020" stroke="#e6e2a0" />
            <path d="M197.500-1q2 0 2.500 1.500 0-1.500 2.500-1.500M200 0v13M197.500 14q2 0 2.500-1.500 0 1.500 2.500 1.500" fill="none" stroke="#222" strokeWidth="3" />
            <path d="M197.500-1q2 0 2.500 1.500 0-1.500 2.500-1.500M200 0v13M197.500 14q2 0 2.500-1.500 0 1.500 2.500 1.500" fill="none" stroke="#fff" />
          </Playhead>
        </Arrange>
      </Main>
    </Page>
  );
}
